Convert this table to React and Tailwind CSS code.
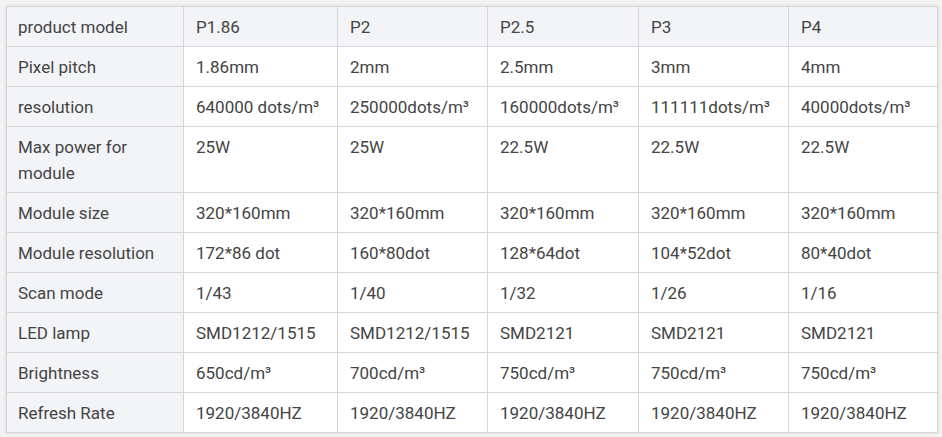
import React from "react";

const header = ["product model", "P1.86", "P2", "P2.5", "P3", "P4"];
const rows = [
  ["Pixel pitch", "1.86mm", "2mm", "2.5mm", "3mm", "4mm"],
  ["resolution", "640000 dots/m³", "250000dots/m³", "160000dots/m³", "111111dots/m³", "40000dots/m³"],
  ["Max power for module", "25W", "25W", "22.5W", "22.5W", "22.5W"],
  ["Module size", "320*160mm", "320*160mm", "320*160mm", "320*160mm", "320*160mm"],
  ["Module resolution", "172*86 dot", "160*80dot", "128*64dot", "104*52dot", "80*40dot"],
  ["Scan mode", "1/43", "1/40", "1/32", "1/26", "1/16"],
  ["LED lamp", "SMD1212/1515", "SMD1212/1515", "SMD2121", "SMD2121", "SMD2121"],
  ["Brightness", "650cd/m³", "700cd/m³", "750cd/m³", "750cd/m³", "750cd/m³"],
  ["Refresh Rate", "1920/3840HZ", "1920/3840HZ", "1920/3840HZ", "1920/3840HZ", "1920/3840HZ"],
];

const widths = [177, 154, 150, 151, 150, 149];

export default function App() {
  return (
    <div
      className="w-[942px] h-[437px] bg-[#f2f2f2] pt-[6px] pl-[6px] overflow-hidden"
      style={{ fontFamily: "Roboto, 'Liberation Sans', sans-serif" }}
    >
      <table className="border-collapse table-fixed w-[931px] bg-white text-[17px] leading-[26px] text-[#444444] shadow-[0_0_3px_rgba(0,0,0,0.12)]">
        <colgroup>
          {widths.map((w, i) => (
            <col key={i} style={{ width: w }} />
          ))}
        </colgroup>
        <tbody>
          <tr className="bg-[#f3f4f8]">
            {header.map((h, i) => (
              <td
                key={i}
                className={
                  i === 0
                    ? "border border-[#d6d6d6] pl-[11px] pr-[8px] pt-[7px] pb-[6px] align-top"
                    : "border border-[#d6d6d6] pl-[12px] pr-[4px] pt-[7px] pb-[6px] align-top"
                }
              >
                {h}
              </td>
            ))}
          </tr>
          {rows.map((r, ri) => (
            <tr key={ri}>
              {r.map((c, ci) => (
                <td
                  key={ci}
                  className={
                    ci === 0
                      ? "border border-[#d6d6d6] bg-[#f3f4f8] pl-[11px] pr-[8px] pt-[7px] pb-[6px] align-top"
                      : "border border-[#d6d6d6] pl-[12px] pr-[2px] pt-[7px] pb-[6px] align-top whitespace-nowrap"
                  }
                >
                  {c}
                </td>
              ))}
            </tr>
          ))}
        </tbody>
      </table>
    </div>
  );
}
